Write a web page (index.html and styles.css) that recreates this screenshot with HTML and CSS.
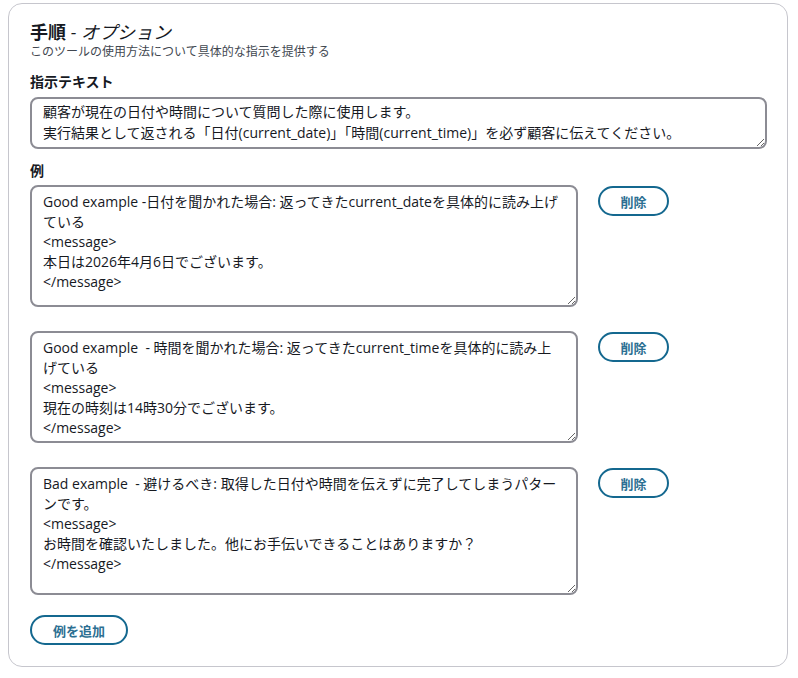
FILE: index.html
```html
<!DOCTYPE html>
<html lang="ja">
<head>
    <meta charset="UTF-8" />
    <meta name="viewport" content="width=device-width, initial-scale=1" />
    <title>手順</title>
    <link rel="stylesheet" href="styles.css">
</head>
<body>
    <section class="panel">
        <h2 class="panel-title">手順 <span class="optional">- オプション</span></h2>
        <p class="panel-desc">このツールの使用方法について具体的な指示を提供する</p>

        <label class="field-label" for="instruction">指示テキスト</label>
        <textarea id="instruction" class="instruction">顧客が現在の日付や時間について質問した際に使用します。
実行結果として返される「日付(current_date)」「時間(current_time)」を必ず顧客に伝えてください。</textarea>

        <div class="field-label examples-label">例</div>
        <div class="examples">
            <div class="example-row">
                <textarea class="example ex-1">Good example -日付を聞かれた場合: 返ってきたcurrent_dateを具体的に読み上げている
&lt;message&gt;
本日は2026年4月6日でございます。
&lt;/message&gt;</textarea>
                <button type="button" class="btn">削除</button>
            </div>
            <div class="example-row">
                <textarea class="example ex-2">Good example  - 時間を聞かれた場合: 返ってきたcurrent_timeを具体的に読み上げている
&lt;message&gt;
現在の時刻は14時30分でございます。
&lt;/message&gt;</textarea>
                <button type="button" class="btn">削除</button>
            </div>
            <div class="example-row">
                <textarea class="example ex-3">Bad example  - 避けるべき: 取得した日付や時間を伝えずに完了してしまうパターンです。
&lt;message&gt;
お時間を確認いたしました。他にお手伝いできることはありますか？
&lt;/message&gt;</textarea>
                <button type="button" class="btn">削除</button>
            </div>
        </div>

        <button type="button" class="btn btn-add">例を追加</button>
    </section>
</body>
</html>
```

FILE: styles.css
```css
body {
    margin: 0;
    padding: 3px 10px 0 8px;
    font-family: "Open Sans", "Noto Sans CJK JP", sans-serif;
    color: #16191f;
    background: #fff;
}

.panel {
    width: 780px;
    height: 664px;
    box-sizing: border-box;
    border: 1px solid #c6c6cd;
    border-radius: 14px;
    padding: 16px 21px 0 21px;
    display: flex;
    flex-direction: column;
    align-items: flex-start;
}

.panel-title {
    margin: 0;
    font-size: 18px;
    line-height: 24px;
    font-weight: 700;
}
.panel-title .optional {
    font-weight: 400;
    font-style: italic;
}

.panel-desc {
    margin: 0;
    font-size: 12px;
    line-height: 16px;
    color: #414750;
}

.field-label {
    display: block;
    margin-top: 12px;
    margin-bottom: 5px;
    font-size: 14px;
    line-height: 20px;
    font-weight: 700;
}
.examples-label {
    margin-top: 12px;
    margin-bottom: 4px;
}

textarea {
    box-sizing: border-box;
    border: 2px solid #8c8c94;
    border-radius: 8px;
    font-family: "Open Sans", "Noto Sans CJK JP", sans-serif;
    font-size: 14px;
    color: #16191f;
    overflow: hidden;
    margin: 0;
}

.instruction {
    width: 737px;
    height: 52px;
    padding: 2px 11px;
    line-height: 21px;
}

.examples {
    display: flex;
    flex-direction: column;
    gap: 24px;
}
.example-row {
    display: flex;
    align-items: flex-start;
    gap: 20px;
}
.example {
    width: 548px;
    padding: 5px 11px;
    line-height: 20px;
}
.ex-1 { height: 122px; }
.ex-2 { height: 112px; }
.ex-3 { height: 128px; }

.btn {
    margin-top: 1px;
    width: 71px;
    height: 30px;
    box-sizing: border-box;
    border: 2px solid #14688f;
    border-radius: 16px;
    background: #fff;
    color: #2c6f92;
    font-family: "Open Sans", "Noto Sans CJK JP", sans-serif;
    font-size: 13px;
    font-weight: 700;
    cursor: pointer;
    padding: 0;
}
.btn-add {
    margin-top: 20px;
    width: 98px;
}
```
